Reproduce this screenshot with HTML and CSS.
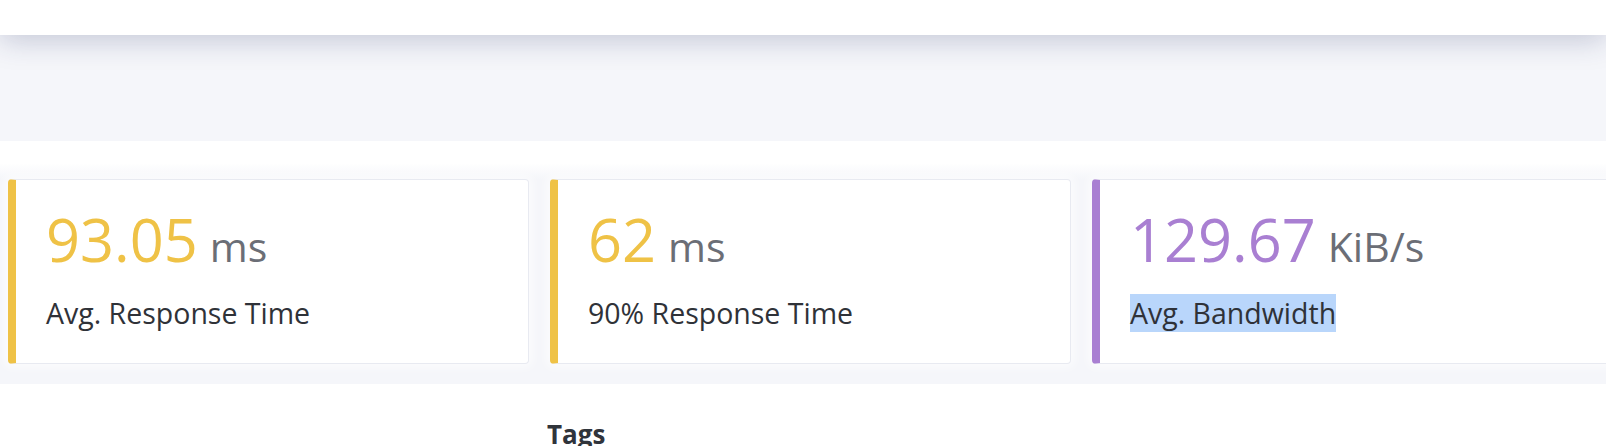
FILE: index.html
```html
<!DOCTYPE html>
<html lang="en">
<head>
<meta charset="utf-8">
<title>Stats</title>
<link rel="stylesheet" href="styles.css">
</head>
<body>
  <header class="topbar"></header>
  <div class="subheader"></div>
  <section class="stats">
    <div class="stat-row">
      <div class="card card-yellow">
        <div class="value">93.05<span class="unit">ms</span></div>
        <div class="label">Avg. Response Time</div>
      </div>
      <div class="card card-yellow">
        <div class="value">62<span class="unit">ms</span></div>
        <div class="label">90% Response Time</div>
      </div>
      <div class="card card-purple">
        <div class="value">129.67<span class="unit">KiB/s</span></div>
        <div class="label"><span class="selected">Avg. Bandwidth</span></div>
      </div>
    </div>
  </section>
  <section class="tags">
    <h2 class="tags-title">Tags</h2>
  </section>
</body>
</html>
```

FILE: styles.css
```css
html, body {
  margin: 0;
  padding: 0;
}
body {
  width: 1606px;
  height: 446px;
  overflow: hidden;
  background: #fff;
  font-family: "Open Sans", "Noto Sans", sans-serif;
}
.topbar {
  position: relative;
  z-index: 1;
  height: 35px;
  background: #fff;
  box-shadow: 0 4px 30px rgba(30, 45, 100, 0.25);
}
.subheader {
  height: 106px;
  background: #f5f6fa;
}
.stats {
  box-sizing: border-box;
  height: 243px;
  padding: 38px 0 0 8px;
  background: linear-gradient(to bottom, #fff 0, #fff 22px, #f5f6fa 38px);
}
.stat-row {
  display: flex;
  gap: 21px;
}
.card {
  flex: 0 0 521px;
  box-sizing: border-box;
  height: 185px;
  padding: 19px 0 0 30px;
  background: #fff;
  border: 1px solid #e8eaf1;
  border-left: 8px solid #efc246;
  border-radius: 4px;
  box-shadow: 0 0 10px 4px rgba(255, 255, 255, 0.6);
}
.card-purple {
  border-left-color: #a97fd2;
}
.value {
  font-size: 59.5px;
  line-height: 80px;
  color: #efc246;
  white-space: nowrap;
}
.card-purple .value {
  color: #a97fd2;
}
.unit {
  margin-left: 12px;
  font-size: 41px;
  color: #6b6e76;
}
.label {
  margin-top: 8px;
  font-size: 28.5px;
  line-height: 38px;
  color: #2f3238;
}
.selected {
  background: #b9d6fb;
}
.tags {
  padding: 32px 0 0 547px;
}
.tags-title {
  margin: 0;
  font-size: 26px;
  line-height: 36px;
  font-weight: 700;
  color: #30343b;
}
```
